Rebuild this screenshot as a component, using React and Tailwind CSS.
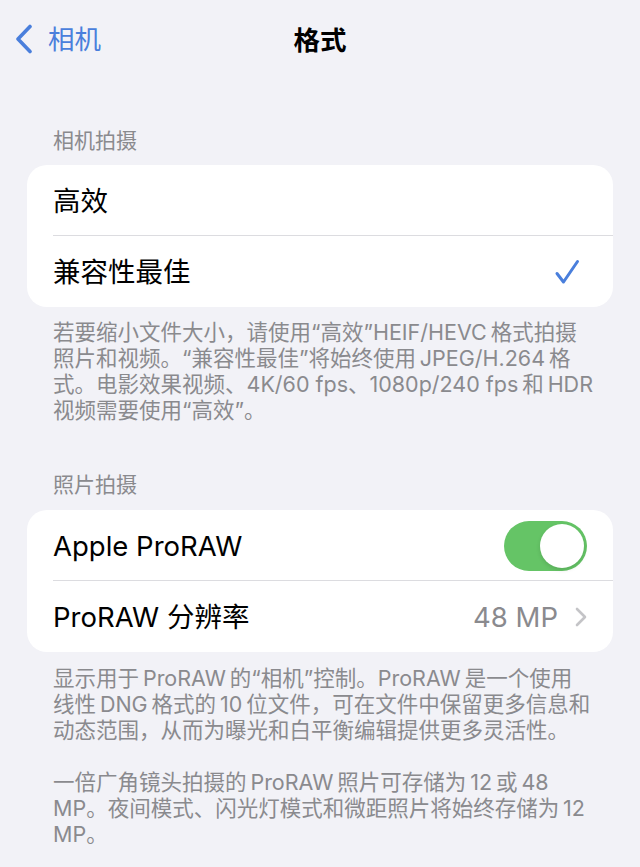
import React from 'react';

const font = { fontFamily: '"Inter", "Noto Sans CJK SC", sans-serif' };

const SectionHeader = ({ children, className = '' }) => (
  <div className={`px-[53px] text-[21px] leading-[26px] text-[#8a8a8e] ${className}`}>{children}</div>
);

const Footer = ({ lines, className = '' }) => (
  <div className={`px-[53px] text-[21.5px] leading-[26px] text-[#8a8a8e] ${className}`}>
    {lines.map((line, i) => (
      <div key={i} className="whitespace-nowrap h-[26px]">
        {line}
      </div>
    ))}
  </div>
);

const Row = ({ children, last }) => (
  <div className="relative flex items-center h-[71px] pl-[26px] pr-[26px] pt-[3px]">
    {children}
    {!last && <div className="absolute bottom-0 left-[26px] right-0 h-px bg-[#dcdce0]" />}
  </div>
);

const Check = () => (
  <svg width="26" height="26" viewBox="0 0 26 26" fill="none">
    <path d="M3 14.5 L9.5 23 L23.5 2.5" stroke="#4a7fdc" strokeWidth="3" strokeLinecap="round" strokeLinejoin="round" />
  </svg>
);

const Toggle = () => (
  <div className="w-[83px] h-[50px] rounded-full bg-[#65c466] p-[3px] flex justify-end">
    <div className="w-[44px] h-[44px] rounded-full bg-white shadow-[0_2px_4px_rgba(0,0,0,0.12)]" />
  </div>
);

export default function App() {
  return (
    <div className="min-h-[867px] bg-[#f2f2f7] text-black" style={font}>
      {/* Nav bar */}
      <div className="relative flex items-center justify-center h-[78px]">
        <div className="absolute left-[14px] top-[24px] flex items-center gap-[14px] text-[#4a7fdc]">
          <svg width="20" height="30" viewBox="0 0 20 30" fill="none">
            <path d="M16 2.5 L4 15 L16 27.5" stroke="#4a7fdc" strokeWidth="3.6" strokeLinecap="round" strokeLinejoin="round" />
          </svg>
          <span className="text-[26.5px] leading-[30px]">相机</span>
        </div>
        <div className="text-[26.5px] font-bold leading-[30px] mt-[2px]">格式</div>
      </div>

      <SectionHeader className="mt-[50px]">相机拍摄</SectionHeader>
      <div className="mx-[27px] mt-[11px] bg-white rounded-[20px] overflow-hidden text-[27.5px]">
        <Row>高效</Row>
        <Row last>
          <span className="flex-1">兼容性最佳</span>
          <span className="mr-[7px] -mt-[2px]">
            <Check />
          </span>
        </Row>
      </div>
      <Footer
        className="mt-[12px]"
        lines={[
          '若要缩小文件大小，请使用“高效”HEIF/HEVC\u2009格式拍摄',
          '照片和视频。“兼容性最佳”将始终使用\u2009JPEG/H.264\u2009格',
          '式。电影效果视频、4K/60 fps、1080p/240 fps\u2009和\u2009HDR',
          '视频需要使用“高效”。',
        ]}
      />

      <SectionHeader className="mt-[49px]">照片拍摄</SectionHeader>
      <div className="mx-[27px] mt-[12px] bg-white rounded-[20px] overflow-hidden text-[27.5px]">
        <Row>
          <span className="flex-1">Apple ProRAW</span>
          <span className="-mt-[3px]">
            <Toggle />
          </span>
        </Row>
        <Row last>
          <span className="flex-1">ProRAW 分辨率</span>
          <span className="text-[#8a8a8e]">48 MP</span>
          <svg className="ml-[17px] -mt-[2px]" width="12" height="20" viewBox="0 0 12 20" fill="none">
            <path d="M2 2 L10 10 L2 18" stroke="#c4c4c7" strokeWidth="2.6" strokeLinecap="round" strokeLinejoin="round" />
          </svg>
        </Row>
      </div>
      <Footer
        className="mt-[13px]"
        lines={[
          '显示用于\u2009ProRAW\u2009的“相机”控制。ProRAW\u2009是一个使用',
          '线性\u2009DNG\u2009格式的\u200910\u2009位文件，可在文件中保留更多信息和',
          '动态范围，从而为曝光和白平衡编辑提供更多灵活性。',
          '',
          '一倍广角镜头拍摄的\u2009ProRAW\u2009照片可存储为\u200912\u2009或\u200948',
          'MP。夜间模式、闪光灯模式和微距照片将始终存储为\u200912',
          'MP。',
        ]}
      />
    </div>
  );
}
